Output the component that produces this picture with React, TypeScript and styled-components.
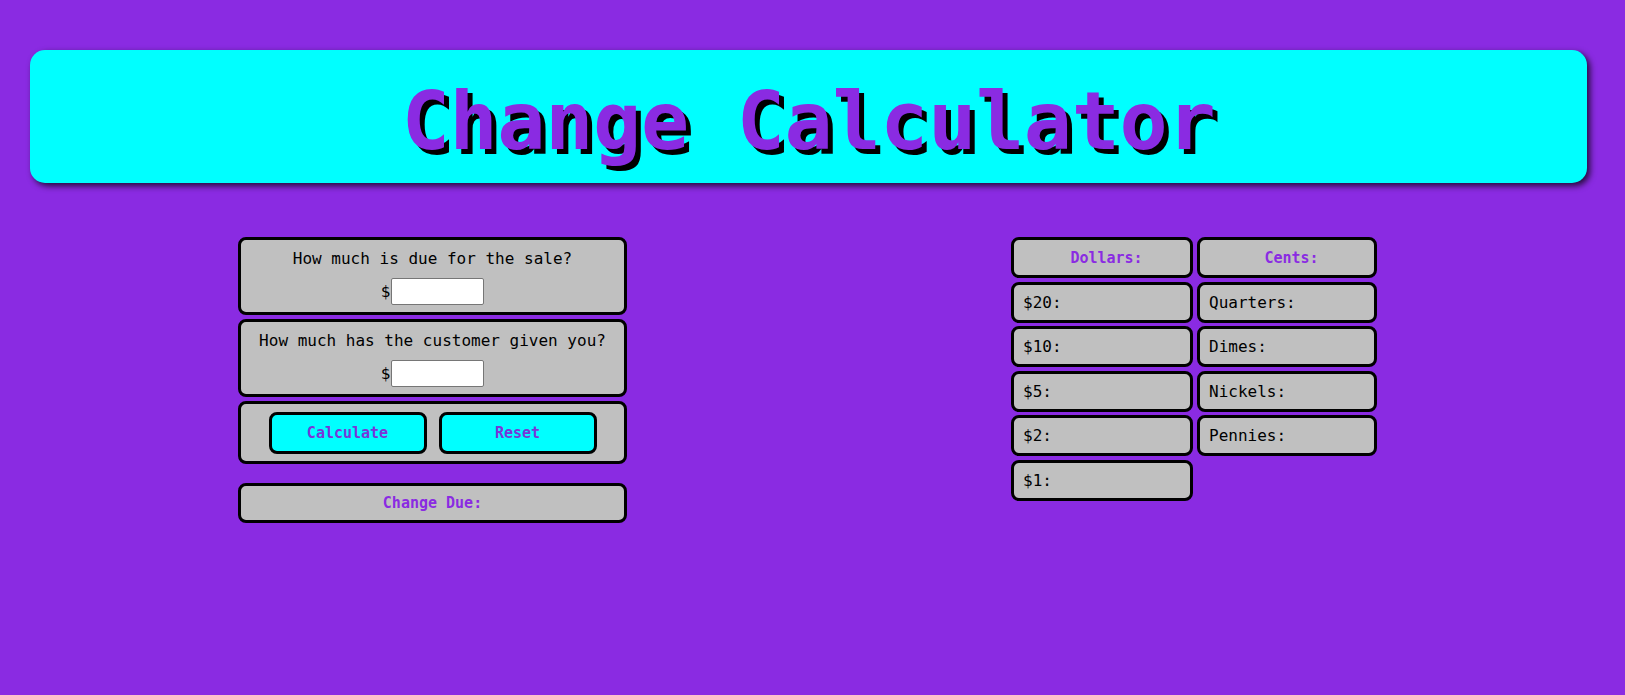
import React from "react";
import styled, { createGlobalStyle } from "styled-components";

const Global = createGlobalStyle`
  html, body { margin: 0; padding: 0; }
  body {
    background: #8a2be2;
    font-family: "DejaVu Sans Mono", "Liberation Mono", monospace;
    font-size: 16px;
    color: #000;
    min-height: 695px;
  }
`;

const Page = styled.div`
  padding: 50px 38px 0 30px;
`;

const Header = styled.header`
  background: #00ffff;
  height: 133px;
  border-radius: 15px;
  box-shadow: 3px 3px 6px rgba(0, 0, 0, 0.75);
  display: flex;
  align-items: center;
  justify-content: center;
`;

const Title = styled.h1`
  margin: 0;
  font-size: 80px;
  font-weight: 700;
  color: #8a2be2;
  text-shadow: 5px 5px 0 #000;
  letter-spacing: -0.3px;
  line-height: 1;
  transform: translateY(5px);
`;

const Main = styled.main`
  display: flex;
  align-items: flex-start;
  padding: 54px 0 0 208px;
  gap: 384px;
`;

const LeftCol = styled.div`
  width: 389px;
  display: flex;
  flex-direction: column;
  gap: 4px;
`;

const Box = styled.div<{ $spaced?: boolean }>`
  background: #c0c0c0;
  border: 3px solid #000;
  border-radius: 8px;
  box-sizing: border-box;
  text-align: center;
  margin-top: ${(p) => (p.$spaced ? "15px" : "0")};
`;

const QuestionBox = styled(Box)`
  padding: 9px 8px 7px;
`;

const Question = styled.div`
  line-height: 20px;
  margin-bottom: 9px;
`;

const InputRow = styled.div`
  display: flex;
  justify-content: center;
  align-items: center;
  line-height: 20px;
`;

const MoneyInput = styled.input`
  width: 93px;
  height: 27px;
  box-sizing: border-box;
  border: 1px solid #767676;
  border-radius: 2px;
  background: #fff;
  padding: 0 2px;
  margin-left: 1px;
  font-family: inherit;
`;

const ButtonBox = styled(Box)`
  display: flex;
  justify-content: center;
  gap: 12px;
  padding: 8px 0 7px;
`;

const ActionButton = styled.button`
  width: 158px;
  height: 42px;
  background: #00ffff;
  border: 3px solid #000;
  border-radius: 8px;
  color: #7a35d8;
  font-family: "DejaVu Sans Mono", monospace;
  font-weight: 700;
  font-size: 15px;
  cursor: pointer;
`;

const ResultBox = styled(Box)`
  height: 40px;
  display: flex;
  align-items: center;
  justify-content: center;
  color: #8a2be2;
  font-weight: 700;
  font-size: 15px;
`;

const Grid = styled.div`
  display: grid;
  grid-template-columns: 182px 180px;
  grid-auto-rows: 41px;
  column-gap: 4px;
  row-gap: 3.5px;
`;

const Cell = styled.div<{ $head?: boolean }>`
  background: #c0c0c0;
  border: 3px solid #000;
  border-radius: 8px;
  box-sizing: border-box;
  display: flex;
  align-items: center;
  padding-left: 9px;
  justify-content: ${(p) => (p.$head ? "center" : "flex-start")};
  color: ${(p) => (p.$head ? "#8a2be2" : "#000")};
  font-weight: ${(p) => (p.$head ? 700 : 400)};
  font-size: ${(p) => (p.$head ? "15px" : "16px")};
`;

const dollars = ["$20:", "$10:", "$5:", "$2:", "$1:"];
const cents = ["Quarters:", "Dimes:", "Nickels:", "Pennies:"];

export default function App() {
  return (
    <Page>
      <Global />
      <Header>
        <Title>Change Calculator</Title>
      </Header>
      <Main>
        <LeftCol>
          <QuestionBox>
            <Question>How much is due for the sale?</Question>
            <InputRow>
              $<MoneyInput type="text" />
            </InputRow>
          </QuestionBox>
          <QuestionBox>
            <Question>How much has the customer given you?</Question>
            <InputRow>
              $<MoneyInput type="text" />
            </InputRow>
          </QuestionBox>
          <ButtonBox>
            <ActionButton>Calculate</ActionButton>
            <ActionButton>Reset</ActionButton>
          </ButtonBox>
          <ResultBox $spaced>Change Due:</ResultBox>
        </LeftCol>
        <Grid>
          <Cell $head>Dollars:</Cell>
          <Cell $head>Cents:</Cell>
          {dollars.map((d, i) => (
            <React.Fragment key={d}>
              <Cell>{d}</Cell>
              {cents[i] ? <Cell>{cents[i]}</Cell> : <div />}
            </React.Fragment>
          ))}
        </Grid>
      </Main>
    </Page>
  );
}
